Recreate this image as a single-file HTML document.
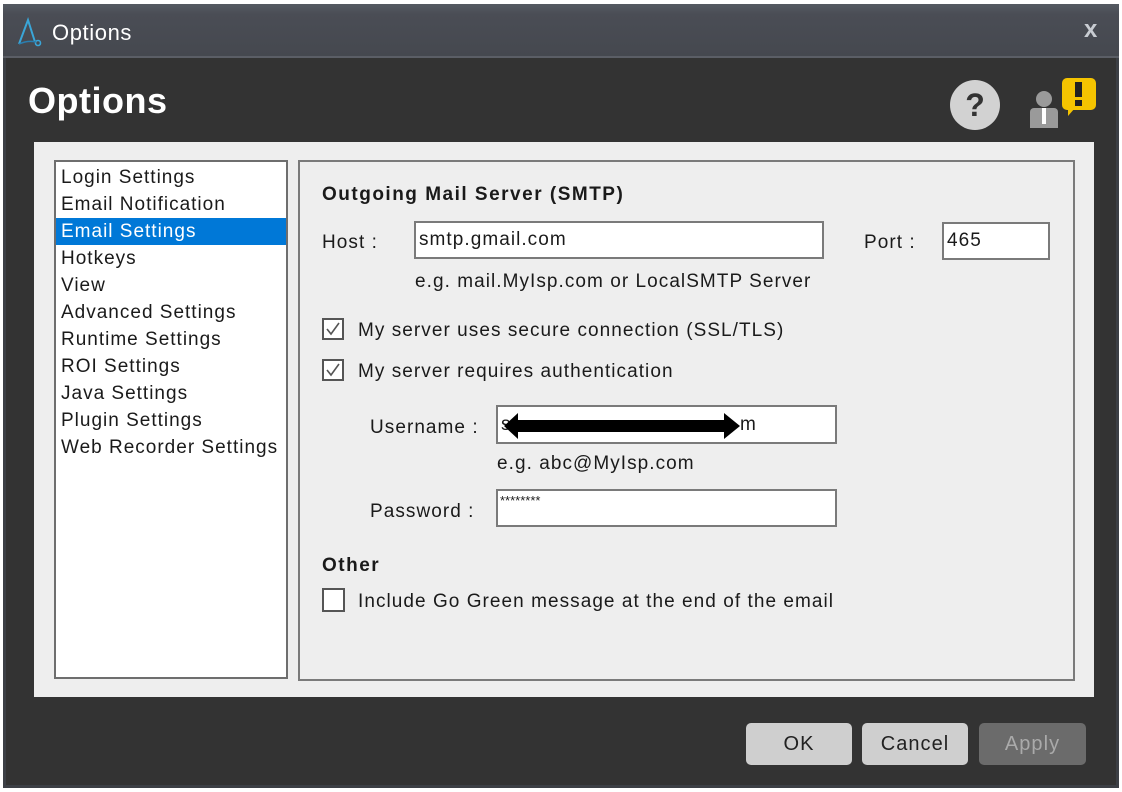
<!DOCTYPE html>
<html><head><meta charset="utf-8"><style>
*{margin:0;padding:0;box-sizing:border-box}
body{width:1122px;height:792px;background:#fff;position:relative;overflow:hidden;font-family:"Liberation Sans",sans-serif;font-size:19px;letter-spacing:1.05px;color:#1a1a1a}
.a{position:absolute}
.frame{left:3px;top:4px;width:1116px;height:784px;background:#333;border:3px solid #3c3f45;border-top:none}
.title{left:3px;top:4px;width:1116px;height:54px;background:linear-gradient(#555a62 0,#4a4d55 20%,#45484f 100%);border-bottom:2px solid #5b5e66}
.t{white-space:nowrap}
.inp{background:#fff;border:2px solid #7a7a7a}
.cb{width:22px;height:22px;background:#fff;border:2px solid #555}
.btn{height:42px;width:106px;background:#cfcfcf;border-radius:5px;text-align:center;line-height:42px;font-size:20px;color:#222}
.li{left:5px;white-space:nowrap;font-size:19px;letter-spacing:1px;height:27px;line-height:27px}
.b{font-weight:bold;letter-spacing:1.5px}
</style></head><body>
<div class="a frame"></div>
<div class="a title"></div>
<svg class="a" style="left:16px;top:16px" width="30" height="32" viewBox="0 0 30 32"><path d="M3 28 L12 4 L19 26" fill="none" stroke="#3aa6d8" stroke-width="2"/><circle cx="22" cy="27" r="2.5" fill="none" stroke="#3aa6d8" stroke-width="1.6"/><path d="M3 28 Q12 24 20 26" fill="none" stroke="#2a7fb0" stroke-width="1.5"/></svg>
<div class="a t" style="left:52px;top:20px;font-size:22px;letter-spacing:0.6px;color:#fff">Options</div>
<div class="a t" style="left:1084px;top:16px;font-size:24px;font-weight:bold;color:#c8ccd2">x</div>
<div class="a t" style="left:28px;top:80px;font-size:36px;font-weight:bold;letter-spacing:0.5px;color:#fff">Options</div>
<div class="a" style="left:950px;top:80px;width:50px;height:50px;border-radius:50%;background:#d2d2d2;color:#333;font-weight:bold;font-size:32px;letter-spacing:0;text-align:center;line-height:50px">?</div>
<div class="a" style="left:1036px;top:91px;width:16px;height:16px;border-radius:50%;background:#9a9a9a"></div>
<div class="a" style="left:1030px;top:108px;width:28px;height:20px;background:#9a9a9a;border-radius:4px 4px 0 0"></div>
<div class="a" style="left:1042px;top:108px;width:4px;height:16px;background:#fff"></div>
<div class="a" style="left:1062px;top:78px;width:34px;height:32px;background:#f5c400;border-radius:5px"></div>
<div class="a" style="left:1068px;top:108px;width:0;height:0;border-left:7px solid #f5c400;border-bottom:8px solid transparent"></div>
<div class="a" style="left:1075px;top:82px;width:7px;height:15px;background:#222"></div>
<div class="a" style="left:1075px;top:100px;width:7px;height:6px;background:#222"></div>

<div class="a" style="left:34px;top:142px;width:1060px;height:555px;background:#eee"></div>
<div class="a" style="left:54px;top:160px;width:234px;height:519px;background:#fff;border:2px solid #6e6e6e">
<div class="a li" style="top:2px">Login Settings</div>
<div class="a li" style="top:29px">Email Notification</div>
<div class="a" style="left:0;top:56px;width:230px;height:27px;background:#0078d7"></div>
<div class="a li" style="top:56px;color:#fff">Email Settings</div>
<div class="a li" style="top:83px">Hotkeys</div>
<div class="a li" style="top:110px">View</div>
<div class="a li" style="top:137px">Advanced Settings</div>
<div class="a li" style="top:164px">Runtime Settings</div>
<div class="a li" style="top:191px">ROI Settings</div>
<div class="a li" style="top:218px">Java Settings</div>
<div class="a li" style="top:245px">Plugin Settings</div>
<div class="a li" style="top:272px">Web Recorder Settings</div>
</div>
<div class="a" style="left:298px;top:160px;width:777px;height:521px;border:2px solid #7a7a7a"></div>

<div class="a t b" style="left:322px;top:184px">Outgoing Mail Server (SMTP)</div>
<div class="a t" style="left:322px;top:232px">Host :</div>
<div class="a inp" style="left:414px;top:221px;width:410px;height:38px"><span class="a t" style="left:3px;top:6px">smtp.gmail.com</span></div>
<div class="a t" style="left:864px;top:232px">Port :</div>
<div class="a inp" style="left:942px;top:222px;width:108px;height:38px"><span class="a t" style="left:3px;top:6px">465</span></div>
<div class="a t" style="left:415px;top:271px">e.g. mail.MyIsp.com or LocalSMTP Server</div>
<div class="a cb" style="left:322px;top:318px"><svg width="18" height="18"><path d="M3 9 L7 14 L15 3" fill="none" stroke="#555" stroke-width="1.6"/></svg></div>
<div class="a t" style="left:358px;top:320px">My server uses secure connection (SSL/TLS)</div>
<div class="a cb" style="left:322px;top:359px"><svg width="18" height="18"><path d="M3 9 L7 14 L15 3" fill="none" stroke="#555" stroke-width="1.6"/></svg></div>
<div class="a t" style="left:358px;top:361px">My server requires authentication</div>
<div class="a t" style="left:370px;top:417px">Username :</div>
<div class="a inp" style="left:496px;top:405px;width:341px;height:39px"><span class="a t" style="left:3px;top:7px">s</span><span class="a t" style="left:242px;top:7px">m</span>
<svg class="a" style="left:6px;top:5px" width="240" height="28"><path d="M0 14 L14 1 L14 8 L220 8 L220 1 L236 14 L220 27 L220 20 L14 20 L14 27 Z" fill="#000"/></svg></div>
<div class="a t" style="left:497px;top:453px">e.g. abc@MyIsp.com</div>
<div class="a t" style="left:370px;top:501px">Password :</div>
<div class="a inp" style="left:496px;top:489px;width:341px;height:38px"><span class="a t" style="left:2px;top:2px;font-size:13px;letter-spacing:0">********</span></div>
<div class="a t b" style="left:322px;top:555px">Other</div>
<div class="a cb" style="left:322px;top:588px;width:23px;height:24px"></div>
<div class="a t" style="left:358px;top:591px">Include Go Green message at the end of the email</div>

<div class="a btn" style="left:746px;top:723px">OK</div>
<div class="a btn" style="left:862px;top:723px">Cancel</div>
<div class="a btn" style="left:979px;top:723px;width:107px;background:#6b6b6b;color:#aaa">Apply</div>
</body></html>
